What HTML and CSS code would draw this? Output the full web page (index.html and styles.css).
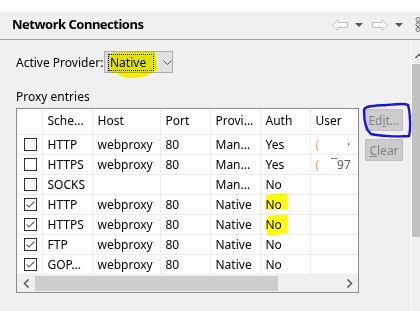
FILE: index.html
```html
<!DOCTYPE html>
<html lang="en">
<head>
  <meta charset="UTF-8">
  <title>Network Connections</title>
  <link rel="stylesheet" href="styles.css">
</head>
<body>
  <div class="topstrip"></div>
  <div class="header">
    <h1>Network Connections</h1>
    <div class="nav">
      <svg class="arrow" width="16" height="12" viewBox="0 0 16 12"><path d="M0.5,6 L6,0.5 L6,3.5 L15.5,3.5 L15.5,8.5 L6,8.5 L6,11.5 Z" fill="#fff" stroke="#c4c4c4"/></svg>
      <span class="tri"></span>
      <svg class="arrow fwd" width="16" height="12" viewBox="0 0 16 12"><path d="M15.5,6 L10,0.5 L10,3.5 L0.5,3.5 L0.5,8.5 L10,8.5 L10,11.5 Z" fill="#fff" stroke="#c4c4c4"/></svg>
      <span class="tri"></span>
      <svg class="menu" width="6" height="15" viewBox="0 0 6 15"><circle cx="3" cy="2.5" r="2" fill="none" stroke="#666"/><circle cx="3" cy="7.5" r="2" fill="none" stroke="#666"/><circle cx="3" cy="12.5" r="2" fill="none" stroke="#666"/></svg>
    </div>
  </div>

  <div class="main">
    <div class="content">
      <div class="provider">
        <span class="label">Active Provider:</span>
        <div class="combo">
          <span class="combo-value">Native</span>
          <svg class="chevron" width="9" height="5" viewBox="0 0 9 5"><path d="M0.5,0.5 L4.5,4.5 L8.5,0.5" fill="none" stroke="#555"/></svg>
        </div>
      </div>

      <div class="section-label">Proxy entries</div>

      <div class="entries">
        <div class="table-box">
          <div class="table-clip">
            <table class="proxies">
              <colgroup>
                <col class="c-check"><col class="c-scheme"><col class="c-host"><col class="c-port"><col class="c-prov"><col class="c-auth"><col class="c-user">
              </colgroup>
              <thead>
                <tr><th></th><th>Sche...</th><th>Host</th><th>Port</th><th>Provi...</th><th>Auth</th><th>User</th></tr>
              </thead>
              <tbody>
                <tr><td><span class="box"></span></td><td>HTTP</td><td>webproxy</td><td>80</td><td>Man...</td><td>Yes</td><td><span class="redact">(</span><span class="redact dot">·</span></td></tr>
                <tr><td><span class="box"></span></td><td>HTTPS</td><td>webproxy</td><td>80</td><td>Man...</td><td>Yes</td><td><span class="redact">(</span><span class="redact far">‾97</span></td></tr>
                <tr><td><span class="box"></span></td><td>SOCKS</td><td></td><td></td><td>Man...</td><td>No</td><td></td></tr>
                <tr><td><span class="box checked"></span></td><td>HTTP</td><td>webproxy</td><td>80</td><td>Native</td><td>No</td><td></td></tr>
                <tr><td><span class="box checked"></span></td><td>HTTPS</td><td>webproxy</td><td>80</td><td>Native</td><td>No</td><td></td></tr>
                <tr><td><span class="box checked"></span></td><td>FTP</td><td>webproxy</td><td>80</td><td>Native</td><td>No</td><td></td></tr>
                <tr><td><span class="box checked"></span></td><td>GOP...</td><td>webproxy</td><td>80</td><td>Native</td><td>No</td><td></td></tr>
              </tbody>
            </table>
          </div>
          <div class="hscroll">
            <svg width="7" height="9" viewBox="0 0 7 9"><path d="M5.5,0.5 L1.5,4.5 L5.5,8.5" fill="none" stroke="#606060" stroke-width="1.6"/></svg>
            <div class="hthumb"></div>
            <svg width="7" height="9" viewBox="0 0 7 9"><path d="M1.5,0.5 L5.5,4.5 L1.5,8.5" fill="none" stroke="#606060" stroke-width="1.6"/></svg>
          </div>
        </div>

        <div class="buttons">
          <button disabled>Ed<u>i</u>t...</button>
          <button disabled><u>C</u>lear</button>
        </div>
      </div>
    </div>

    <div class="vscroll">
      <svg class="vs-up" width="8" height="6" viewBox="0 0 8 6"><path d="M0.5,5 L4,1.5 L7.5,5" fill="none" stroke="#606060" stroke-width="1.5"/></svg>
      <div class="vthumb"></div>
    </div>
  </div>

  <!-- hand-drawn annotations over the screenshot -->
  <svg class="marks" width="420" height="311" viewBox="0 0 420 311">
    <g class="hl">
      <path d="M107,54 C110,52 130,52 155,52 L157,70 C150,73 149,77 135,78 C123,78 119,76 117,73 L107,72 Z"/>
      <path d="M266,195 L287,193 L288,209 L266,210 Z"/>
      <path d="M266,217 C272,215 282,214 287,215 L288,233 L268,236 C266,233 266,224 266,217 Z"/>
    </g>
    <path class="circle" d="M364,111 C363,106 372,106 386,105 C398,104 405,103 408,105 C410,112 411,128 409,136 C398,137 380,136 371,134 C366,130 364,120 364,111 Z"/>
  </svg>
</body>
</html>
```

FILE: styles.css
```css
html, body {
  margin: 0;
  padding: 0;
}
body {
  width: 420px;
  height: 311px;
  overflow: hidden;
  position: relative;
  background: #f0f0f0;
  font-family: "Noto Sans", sans-serif;
  font-size: 12px;
  color: #000;
}
.topstrip {
  height: 12px;
  background: #fff;
}
.header {
  height: 27px;
  border-bottom: 1px solid #a0a0a0;
  display: flex;
  align-items: center;
  justify-content: space-between;
  padding-left: 12px;
}
h1 {
  margin: 0;
  font-size: 13px;
  letter-spacing: -0.5px;
  font-weight: bold;
  line-height: 1;
  padding-bottom: 2px;
}
.nav {
  display: flex;
  align-items: center;
  margin-right: -1px;
  padding-bottom: 2px;
}
.arrow {
  margin-right: 7px;
}
.fwd {
  margin-left: 9px;
}
.tri {
  width: 0;
  height: 0;
  border-left: 4px solid transparent;
  border-right: 4px solid transparent;
  border-top: 4px solid #555;
}
.menu {
  margin-left: 12px;
}
.main {
  display: flex;
  height: 271px;
}
.content {
  width: 395px;
  padding-left: 16px;
}
.provider {
  display: flex;
  align-items: center;
  margin-top: 11px;
  height: 22px;
}
.label {
  width: 88px;
}
.combo {
  box-sizing: border-box;
  width: 69px;
  height: 22px;
  border: 1px solid #adadad;
  background: #e1e1e1;
  display: flex;
  align-items: center;
  padding-left: 3px;
}
.combo-value {
  border: 1px dotted #000;
  width: 43px;
  height: 15px;
  line-height: 15px;
  padding-left: 1px;
}
.chevron {
  margin-left: 9px;
}
.section-label {
  margin-top: 16px;
  height: 16px;
  line-height: 16px;
}
.entries {
  display: flex;
  align-items: flex-start;
  margin-top: 3px;
}
.table-box {
  width: 341px;
  border: 1px solid #8c8c8c;
  background: #fff;
}
.table-clip {
  overflow: hidden;
  width: 341px;
}
.proxies {
  table-layout: fixed;
  border-collapse: collapse;
  width: 360px;
}
.c-check { width: 25px; }
.c-scheme { width: 50px; }
.c-host { width: 68px; }
.c-port { width: 50px; }
.c-prov { width: 50px; }
.c-auth { width: 50px; }
.c-user { width: 67px; }
.proxies th, .proxies td {
  border: 1px solid #ededed;
  padding: 0 0 0 5px;
  text-align: left;
  white-space: nowrap;
  overflow: hidden;
  font-weight: normal;
}
.proxies tr > :first-child {
  border-left: none;
}
.proxies thead tr {
  height: 25px;
}
.proxies thead th {
  border-top: none;
  padding-bottom: 2px;
}
.proxies tbody tr {
  height: 20px;
}
.proxies td:first-child {
  padding-left: 7px;
}
.box {
  display: block;
  box-sizing: border-box;
  width: 13px;
  height: 13px;
  border: 1px solid #333;
  background: #fff;
}
.box.checked {
  background: #fff url("data:image/svg+xml,%3Csvg xmlns='http://www.w3.org/2000/svg' width='11' height='11'%3E%3Cpath d='M1.5,5.5 L4,8 L9.5,2.5' fill='none' stroke='%23666' stroke-width='1.2'/%3E%3C/svg%3E") no-repeat center;
}
.redact {
  color: #e88a3c;
  opacity: 0.8;
}
.dot {
  margin-left: 28px;
  color: #333;
}
.far {
  margin-left: 12px;
  color: #333;
}
.hscroll {
  height: 17px;
  background: #f0f0f0;
  display: flex;
  align-items: center;
  padding: 0 5px 0 6px;
}
.hthumb {
  width: 243px;
  height: 15px;
  background: #cdcdcd;
  margin-left: 5px;
  margin-right: auto;
}
.buttons {
  display: flex;
  flex-direction: column;
  gap: 8px;
  margin-left: 6px;
  margin-top: 1px;
}
button {
  box-sizing: border-box;
  width: 38px;
  height: 22px;
  padding: 0;
  font-family: inherit;
  font-size: 12px;
  color: #838383;
  background: #cccccc;
  border: 1px solid #bfbfbf;
}
.vscroll {
  box-sizing: border-box;
  width: 9px;
  border-left: 1px solid #fff;
  margin-left: 0;
  display: flex;
  flex-direction: column;
  align-items: flex-start;
}
.vs-up {
  margin: 13px 0 0 3px;
}
.vthumb {
  width: 8px;
  height: 173px;
  background: #c2c2c2;
  margin-top: 5px;
}
.marks {
  position: absolute;
  left: 0;
  top: 0;
  pointer-events: none;
}
.hl path {
  fill: #ffff00;
  mix-blend-mode: multiply;
}
.circle {
  fill: none;
  stroke: #1414f0;
  stroke-width: 2.4;
  stroke-linejoin: round;
}
```
